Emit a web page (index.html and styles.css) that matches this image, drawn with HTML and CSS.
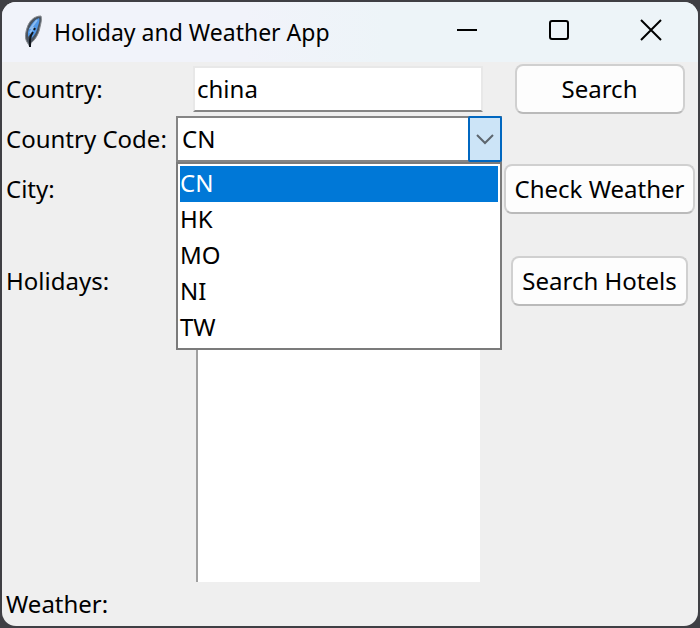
FILE: index.html
```html
<!DOCTYPE html>
<html lang="en">
<head>
<meta charset="utf-8">
<title>Holiday and Weather App</title>
<link rel="stylesheet" href="styles.css">
</head>
<body>
<div class="window">
  <header class="titlebar">
    <svg class="feather" viewBox="0 0 20 34" aria-hidden="true">
      <path d="M19 1C12 1 7 6 5 13C3 19 3 24 5 27L8 32L9 28C14 24 17 18 18 12C19 8 20 4 19 1Z" fill="#4a535f" stroke="#85888c" stroke-width="1"/>
      <path d="M17 3C12 5 8 10 6 17L6 22L10 17L9 24C13 20 15 16 16 11C17 8 18 5 17 3Z" fill="#4f96e6"/>
      <path d="M15 5L9 13L11 13L8 18" fill="none" stroke="#8dbcf0" stroke-width="2"/>
      <path d="M13 13L12 15M11 17Q8 21 8 25V32" fill="none" stroke="#10151c" stroke-width="2"/>
    </svg>
    <h1 class="title">Holiday and Weather App</h1>
    <div class="controls">
      <button class="control" type="button" aria-label="Minimize">
        <svg class="control-icon" viewBox="0 0 22 22"><path d="M1 11H21"/></svg>
      </button>
      <button class="control" type="button" aria-label="Maximize">
        <svg class="control-icon" viewBox="0 0 22 22"><rect x="2" y="2" width="18" height="18" rx="2"/></svg>
      </button>
      <button class="control" type="button" aria-label="Close">
        <svg class="control-icon" viewBox="0 0 22 22"><path d="M1 1L21 21M21 1L1 21"/></svg>
      </button>
    </div>
  </header>
  <main class="form">
    <label class="label" for="country">Country:</label>
    <input class="entry" id="country" type="text" value="china">
    <button class="button" type="button">Search</button>

    <label class="label" for="code">Country Code:</label>
    <div class="combo">
      <select class="combo-field" id="code">
        <option selected>CN</option>
        <option>HK</option>
        <option>MO</option>
        <option>NI</option>
        <option>TW</option>
      </select>
      <span class="combo-arrow" aria-hidden="true">
        <svg class="chevron" viewBox="0 0 18 12"><path d="M1 2L9 10L17 2"/></svg>
      </span>
      <ul class="popup" role="listbox" aria-label="Country Code">
        <li class="option option-selected" role="option" aria-selected="true">CN</li>
        <li class="option" role="option">HK</li>
        <li class="option" role="option">MO</li>
        <li class="option" role="option">NI</li>
        <li class="option" role="option">TW</li>
      </ul>
    </div>

    <label class="label" for="city">City:</label>
    <input class="entry" id="city" type="text">
    <button class="button" type="button">Check Weather</button>

    <label class="label holidays" for="holidays">Holidays:</label>
    <textarea class="list" id="holidays" readonly></textarea>
    <button class="button hotels" type="button">Search Hotels</button>

    <p class="label">Weather:</p>
  </main>
</div>
</body>
</html>
```
FILE: styles.css
```css
* {
  box-sizing: border-box;
}

body {
  margin: 0;
  padding: 2px;
  min-height: 100vh;
  display: flex;
  background: #3f3f44;
  color: #000;
  font: 24px/36px "Noto Sans", "Open Sans", sans-serif;
}

.window {
  flex: 1;
  display: flex;
  flex-direction: column;
  border-radius: 14px;
  background: #efefef;
}

.titlebar {
  display: flex;
  align-items: center;
  height: 60px;
  padding: 0 1px 0 20px;
  border-radius: 14px 14px 0 0;
  background: linear-gradient(90deg, #f1f3fa 35%, #edf4f8 55%);
}

.feather {
  width: 20px;
  height: 34px;
}

.title {
  flex: 1;
  margin: 0 0 0 12px;
  font-size: 23px;
  font-weight: 400;
  white-space: nowrap;
}

.controls {
  display: flex;
  align-self: flex-start;
}

.control {
  display: grid;
  place-items: center;
  width: 92px;
  height: 56px;
  padding: 0;
  border: 0;
  background: none;
}

.control-icon {
  width: 22px;
  height: 22px;
  fill: none;
  stroke: #000;
  stroke-width: 2;
}

.form {
  flex: 1;
  display: grid;
  grid-template-columns: 174px 326px 1fr;
  grid-template-rows: 50px 50px 50px 1fr 44px;
  justify-items: center;
  align-items: center;
  padding: 2px 1px 0 0;
}

.label {
  grid-column: 1;
  justify-self: start;
  margin: 0;
  padding-left: 4px;
  white-space: nowrap;
}

.entry {
  width: 290px;
  height: 46px;
  margin-right: 2px;
  padding: 0 2px 2px;
  border: 2px solid #e8e8e8;
  border-bottom-color: #858585;
  background: #fff;
  color: inherit;
  font: inherit;
  outline: 0;
}

.button {
  min-width: 170px;
  height: 50px;
  padding: 0 9px;
  border: 2px solid #d0d0d0;
  border-bottom-color: #bababa;
  border-radius: 8px;
  background: #fdfdfd;
  color: inherit;
  font: inherit;
  white-space: nowrap;
}

.combo {
  position: relative;
  width: 100%;
}

.combo-field {
  display: block;
  width: 100%;
  height: 46px;
  padding: 0 4px;
  appearance: none;
  border: 2px solid #858585;
  border-radius: 0;
  background: #fff;
  color: inherit;
  font: inherit;
  outline: 0;
}

.combo-arrow {
  position: absolute;
  top: 0;
  right: 0;
  display: grid;
  place-items: center;
  width: 34px;
  height: 46px;
  border: 2px solid #0067c0;
  border-radius: 2px;
  background: #cce4f7;
  pointer-events: none;
}

.chevron {
  width: 18px;
  height: 12px;
  fill: none;
  stroke: #5d666e;
  stroke-width: 2;
}

.popup {
  position: absolute;
  top: 100%;
  left: 0;
  z-index: 1;
  width: 100%;
  margin: 0;
  padding: 2px;
  border: 2px solid #7b7b7b;
  background: #fff;
  list-style: none;
}

.option {
  height: 36px;
  line-height: 34px;
}

.option-selected {
  background: #0078d7;
  color: #fff;
}

.holidays,
.hotels {
  align-self: start;
  margin-top: 42px;
}

.holidays {
  line-height: 50px;
}

.list {
  align-self: stretch;
  width: 284px;
  margin: 16px 2px 0 0;
  padding: 0;
  border: 0;
  border-left: 2px solid #a0a0a0;
  background: #fff;
  font: inherit;
  resize: none;
  outline: 0;
}
```
